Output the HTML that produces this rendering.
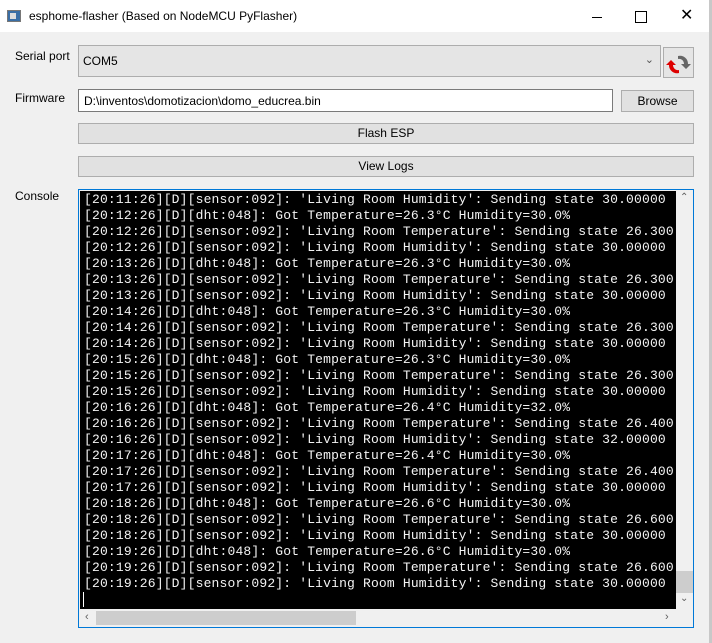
<!DOCTYPE html><html><head><style>
body{margin:0;width:712px;height:643px;background:#f0f0f0;position:relative;overflow:hidden;font-family:"Liberation Sans",sans-serif;font-size:12px;color:#000}
.a{position:absolute}
.btn{position:absolute;background:#e1e1e1;border:1px solid #adadad;box-sizing:border-box;text-align:center;font-size:12px}
pre{margin:0;font-family:"Liberation Mono",monospace;font-size:13px;letter-spacing:0.17px;line-height:16px;color:#f4f4f4}
</style></head><body>
<div class="a" style="left:0;top:0;width:709px;height:32px;background:#fff"></div>
<div class="a" style="left:709px;top:0;width:3px;height:643px;background:#c8c8c8"></div>
<div class="a" style="left:7px;top:10px;width:14px;height:12px;background:#3a6ea5;border:1px solid #777;box-sizing:border-box"><div style="position:absolute;left:2px;top:2px;width:6px;height:6px;background:#ddd"></div></div>
<div class="a" style="left:29px;top:9px;font-size:12px">esphome-flasher (Based on NodeMCU PyFlasher)</div>
<div class="a" style="left:592px;top:17px;width:10px;height:1px;background:#000"></div>
<div class="a" style="left:635px;top:11px;width:10px;height:10px;border:1px solid #000"></div>
<div class="a" style="left:680px;top:5px;font-size:16px;font-weight:300">✕</div>
<div class="a" style="left:15px;top:49px">Serial port</div>
<div class="a" style="left:78px;top:45px;width:583px;height:32px;background:#e5e5e5;border:1px solid #adadad;box-sizing:border-box"><span style="position:absolute;left:4px;top:8px">COM5</span><span style="position:absolute;right:6px;top:7px;color:#555;font-size:11px">&#8964;</span></div>
<div class="a" style="left:663px;top:47px;width:31px;height:31px;background:#e5e5e5;border:1px solid #adadad;box-sizing:border-box">
<svg width="29" height="29" viewBox="0 0 29 29"><path d="M14 8 A8 8 0 0 1 24 16 L27 16 L22 21 L17 16 L20 16 A5 5 0 0 0 14 11Z" fill="#666"/><path d="M15 22 A8 8 0 0 1 5 14 L2 14 L7 9 L12 14 L9 14 A5 5 0 0 0 15 19Z" fill="#d00" transform="translate(0,3)"/></svg></div>
<div class="a" style="left:15px;top:91px">Firmware</div>
<div class="a" style="left:78px;top:89px;width:535px;height:23px;background:#fff;border:1px solid #7a7a7a;box-sizing:border-box"><span style="position:absolute;left:5px;top:4px">D:\inventos\domotizacion\domo_educrea.bin</span></div>
<div class="btn" style="left:621px;top:90px;width:73px;height:22px;line-height:20px">Browse</div>
<div class="btn" style="left:78px;top:123px;width:616px;height:21px;line-height:19px">Flash ESP</div>
<div class="btn" style="left:78px;top:156px;width:616px;height:21px;line-height:19px">View Logs</div>
<div class="a" style="left:15px;top:189px">Console</div>
<div class="a" style="left:78px;top:189px;width:616px;height:439px;border:1px solid #0078d7;box-sizing:border-box;background:#f0f0f0"></div>
<div class="a" style="left:80px;top:191px;width:596px;height:418px;background:#000;overflow:hidden"><pre style="padding:1px 0 0 4px">[20:11:26][D][sensor:092]: 'Living Room Humidity': Sending state 30.00000
[20:12:26][D][dht:048]: Got Temperature=26.3°C Humidity=30.0%
[20:12:26][D][sensor:092]: 'Living Room Temperature': Sending state 26.300
[20:12:26][D][sensor:092]: 'Living Room Humidity': Sending state 30.00000
[20:13:26][D][dht:048]: Got Temperature=26.3°C Humidity=30.0%
[20:13:26][D][sensor:092]: 'Living Room Temperature': Sending state 26.300
[20:13:26][D][sensor:092]: 'Living Room Humidity': Sending state 30.00000
[20:14:26][D][dht:048]: Got Temperature=26.3°C Humidity=30.0%
[20:14:26][D][sensor:092]: 'Living Room Temperature': Sending state 26.300
[20:14:26][D][sensor:092]: 'Living Room Humidity': Sending state 30.00000
[20:15:26][D][dht:048]: Got Temperature=26.3°C Humidity=30.0%
[20:15:26][D][sensor:092]: 'Living Room Temperature': Sending state 26.300
[20:15:26][D][sensor:092]: 'Living Room Humidity': Sending state 30.00000
[20:16:26][D][dht:048]: Got Temperature=26.4°C Humidity=32.0%
[20:16:26][D][sensor:092]: 'Living Room Temperature': Sending state 26.400
[20:16:26][D][sensor:092]: 'Living Room Humidity': Sending state 32.00000
[20:17:26][D][dht:048]: Got Temperature=26.4°C Humidity=30.0%
[20:17:26][D][sensor:092]: 'Living Room Temperature': Sending state 26.400
[20:17:26][D][sensor:092]: 'Living Room Humidity': Sending state 30.00000
[20:18:26][D][dht:048]: Got Temperature=26.6°C Humidity=30.0%
[20:18:26][D][sensor:092]: 'Living Room Temperature': Sending state 26.600
[20:18:26][D][sensor:092]: 'Living Room Humidity': Sending state 30.00000
[20:19:26][D][dht:048]: Got Temperature=26.6°C Humidity=30.0%
[20:19:26][D][sensor:092]: 'Living Room Temperature': Sending state 26.600
[20:19:26][D][sensor:092]: 'Living Room Humidity': Sending state 30.00000</pre>
<div class="a" style="left:3px;top:401px;width:1px;height:15px;background:#fff"></div></div>
<div class="a" style="left:676px;top:191px;width:17px;height:418px;background:#f0f0f0"></div>
<div class="a" style="left:680px;top:192px;font-size:10px;color:#606060">&#8963;</div>
<div class="a" style="left:676px;top:571px;width:17px;height:22px;background:#cdcdcd"></div>
<div class="a" style="left:680px;top:593px;font-size:10px;color:#606060">&#8964;</div>
<div class="a" style="left:80px;top:609px;width:613px;height:18px;background:#f0f0f0"></div>
<div class="a" style="left:85px;top:611px;font-size:11px;color:#606060">&lsaquo;</div>
<div class="a" style="left:96px;top:611px;width:260px;height:14px;background:#cdcdcd"></div>
<div class="a" style="left:665px;top:611px;font-size:11px;color:#606060">&rsaquo;</div>
</body></html>
